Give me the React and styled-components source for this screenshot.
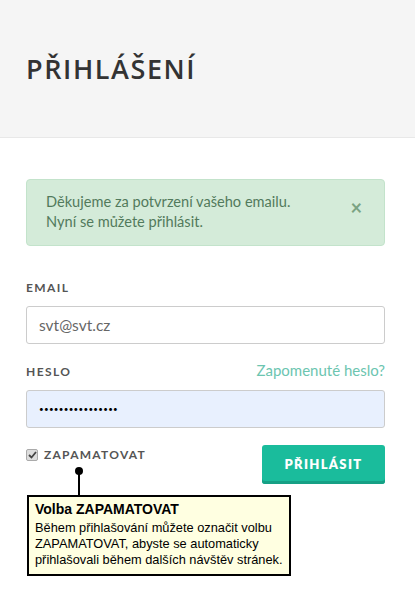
import React, { useState } from 'react'
import styled, { createGlobalStyle } from 'styled-components'

const GlobalStyle = createGlobalStyle`
  html, body {
    margin: 0;
    padding: 0;
    background: #fff;
  }
  body {
    font-family: "Lato", "Open Sans", sans-serif;
    color: #555;
  }
  * { box-sizing: border-box; }
`

const Page = styled.div`
  width: 415px;
  min-height: 607px;
  background: #fff;
`

const Header = styled.div`
  background: #f5f5f5;
  border-bottom: 1px solid #e8e8e8;
  height: 138px;
  padding: 0 26px;
  display: flex;
  align-items: center;
`

const Title = styled.h1`
  margin: 0;
  font-family: "Open Sans", sans-serif;
  font-size: 27px;
  font-weight: 600;
  letter-spacing: 1.6px;
  color: #333;
`

const Content = styled.div`
  padding: 41px 30px 0 26px;
`

const Alert = styled.div`
  background: #d4ebd9;
  border: 1px solid #c3e3cb;
  border-radius: 4px;
  padding: 12px 20px 13px 19px;
  display: flex;
  justify-content: space-between;
  align-items: center;
  color: #527a5c;
  font-size: 14.6px;
  line-height: 20px;
`

const Close = styled.span`
  color: #7aa383;
  font-size: 20px;
  font-weight: 700;
  margin-right: 2px;
  margin-top: -10px;
  cursor: pointer;
`

const Label = styled.label`
  display: block;
  font-size: 12px;
  font-weight: 700;
  letter-spacing: 1.4px;
  color: #555;
  text-transform: uppercase;
`

const LabelRow = styled.div`
  display: flex;
  justify-content: space-between;
  align-items: baseline;
  margin-top: ${p => p.top}px;
  margin-bottom: 11px;
`

const Forgot = styled.a`
  color: #6cc5b0;
  font-size: 15px;
  text-decoration: none;
`

const Input = styled.input`
  display: block;
  width: 100%;
  height: 38px;
  border: 1px solid #ccc;
  border-radius: 3px;
  padding: 0 12px;
  font-family: "Lato", sans-serif;
  font-size: 15.5px;
  color: #666;
  background: #fff;
  outline: none;

  &[type='password'] {
    background: #e8f0fe;
    color: #000;
    font-size: 8px;
    letter-spacing: 0.3px;
  }
`

const Actions = styled.div`
  display: flex;
  justify-content: space-between;
  align-items: flex-start;
  margin-top: 17px;
  position: relative;
`

const Remember = styled.label`
  display: flex;
  align-items: center;
  gap: 6px;
  font-size: 12px;
  font-weight: 700;
  letter-spacing: 1.25px;
  color: #555;
  margin-top: 2px;
`

const Check = styled.span`
  width: 12px;
  height: 12px;
  border: 1px solid #aaa;
  border-radius: 2px;
  background: #ddd;
  display: flex;
  align-items: center;
  justify-content: center;
`

const Button = styled.button`
  width: 123px;
  height: 39px;
  border: none;
  border-radius: 3px;
  background: #1abc9c;
  box-shadow: inset 0 -3px 0 #16a085;
  color: #fff;
  font-family: "Lato", sans-serif;
  font-weight: 800;
  font-size: 13px;
  letter-spacing: 1.3px;
  padding-bottom: 2px;
  cursor: pointer;
`

const Tooltip = styled.div`
  position: absolute;
  left: 1px;
  top: 50px;
  width: 264px;
  background: #ffffe1;
  border: 2px solid #000;
  padding: 3px 6px 6px 6px;
  font-family: "Liberation Sans", Arial, sans-serif;
  color: #000;
`

const Pin = styled.div`
  position: absolute;
  left: 46px;
  top: -30px;
  width: 8px;
  height: 30px;
  &::before {
    content: '';
    position: absolute;
    left: 0;
    top: 0;
    width: 8px;
    height: 8px;
    border-radius: 50%;
    background: #000;
  }
  &::after {
    content: '';
    position: absolute;
    left: 3px;
    top: 4px;
    width: 2px;
    height: 26px;
    background: #000;
  }
`

const TipTitle = styled.div`
  font-weight: 700;
  font-size: 14px;
  line-height: 18px;
  margin-bottom: 2px;
`

const TipText = styled.div`
  font-size: 12.8px;
  line-height: 16px;
`

export default function App() {
  const [email, setEmail] = useState('svt@svt.cz')
  const [pass, setPass] = useState('heslo12345678901')

  return (
    <Page>
      <GlobalStyle />
      <Header>
        <Title>PŘIHLÁŠENÍ</Title>
      </Header>
      <Content>
        <Alert>
          <div>
            Děkujeme za potvrzení vašeho emailu.<br />
            Nyní se můžete přihlásit.
          </div>
          <Close>×</Close>
        </Alert>

        <LabelRow top={34}>
          <Label>Email</Label>
        </LabelRow>
        <Input value={email} onChange={e => setEmail(e.target.value)} type="text" />

        <LabelRow top={17}>
          <Label>Heslo</Label>
          <Forgot href="#">Zapomenuté heslo?</Forgot>
        </LabelRow>
        <Input value={pass} onChange={e => setPass(e.target.value)} type="password" />

        <Actions>
          <Remember>
            <Check>
              <svg width="9" height="8" viewBox="0 0 9 8">
                <path d="M1 4 L3.5 6.5 L8 1" stroke="#444" strokeWidth="1.8" fill="none" />
              </svg>
            </Check>
            ZAPAMATOVAT
          </Remember>
          <Button>PŘIHLÁSIT</Button>
          <Tooltip>
            <Pin />
            <TipTitle>Volba ZAPAMATOVAT</TipTitle>
            <TipText>
              Během přihlašování můžete označit volbu ZAPAMATOVAT, abyste se automaticky přihlašovali během dalších návštěv stránek.
            </TipText>
          </Tooltip>
        </Actions>
      </Content>
    </Page>
  )
}
